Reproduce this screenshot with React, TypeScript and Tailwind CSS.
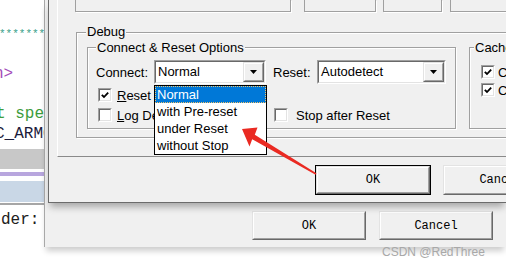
import React from "react";

function Check({ checked }: { checked?: boolean }) {
  return (
    <div className="w-[14px] h-[14px] shrink-0 border border-t-[#a0a0a0] border-l-[#a0a0a0] border-r-white border-b-white">
      <div className="w-full h-full bg-white border border-t-[#696969] border-l-[#696969] border-r-[#e3e3e3] border-b-[#e3e3e3] flex items-center justify-center">
        {checked && (
          <svg width="8" height="8" viewBox="0 0 8 8" className="block">
            <path d="M0.8 3.8 L3 6 L7.2 1.6" stroke="#000" strokeWidth="1.8" fill="none" />
          </svg>
        )}
      </div>
    </div>
  );
}

function Raised({ className, children }: { className?: string; children?: React.ReactNode }) {
  return (
    <div className={`shrink-0 border border-t-[#e3e3e3] border-l-[#e3e3e3] border-r-[#696969] border-b-[#696969] ${className ?? ""}`}>
      <div className="w-full h-full bg-[#f0f0f0] border border-t-white border-l-white border-r-[#a0a0a0] border-b-[#a0a0a0] flex items-center justify-center">
        {children}
      </div>
    </div>
  );
}

function Combo({ value, className, children }: { value: string; className: string; children?: React.ReactNode }) {
  return (
    <div className={`relative h-[24px] shrink-0 ${className}`}>
      <div className="h-full border border-t-[#a0a0a0] border-l-[#a0a0a0] border-r-white border-b-white">
        <div className="h-full flex bg-white border border-t-[#696969] border-l-[#696969] border-r-[#e3e3e3] border-b-[#e3e3e3]">
          <div className="flex-1 pl-[2px] leading-[20px] whitespace-nowrap overflow-hidden">{value}</div>
          <Raised className="w-[21px] h-full">
            <svg width="7" height="4" viewBox="0 0 7 4" className="block">
              <path d="M0 0H7L3.5 4Z" fill="#000" />
            </svg>
          </Raised>
        </div>
      </div>
      {children}
    </div>
  );
}

function DlgButton({ label, className, isDefault }: { label: string; className: string; isDefault?: boolean }) {
  const inner = (
    <Raised className="w-full h-full">
      <span className="font-['Liberation_Mono','Courier_New',monospace] text-[12px] leading-[14px] text-black">{label}</span>
    </Raised>
  );
  if (isDefault) {
    return <div className={`shrink-0 border border-black ${className}`}>{inner}</div>;
  }
  return <div className={`shrink-0 ${className}`}>{inner}</div>;
}

const etched = "border border-[#a0a0a0] shadow-[inset_1px_1px_0_#fff,1px_1px_0_#fff]";

function Editor() {
  return (
    <div className="w-[44px] shrink-0 h-full overflow-hidden bg-white flex flex-col font-['Liberation_Mono','Courier_New',monospace] text-[16px] leading-[20px] whitespace-nowrap">
      <div className="mt-[24px] h-[20px] text-[11px] leading-[20px] text-[#38a08a] ml-[-1px]">**********</div>
      <div className="mt-[20px] h-[20px] text-[#a44cb8] ml-[-6px]">n&gt;</div>
      <div className="mt-[20px] h-[20px] text-[#3c9c3c] ml-[-4px]">t spec</div>
      <div className="h-[20px] text-[#1c1c3c] ml-[-5px]">C_ARMCC</div>
      <div className="mt-[5px] h-[20px] bg-[#c8c8c8]" />
      <div className="mt-[3px] h-[4px] bg-[#b8a6de]" />
      <div className="mt-[5px] h-[21px] bg-[#c9d7e6]" />
      <div className="mt-[1px] h-[2px] bg-[#a6a6a6]" />
      <div className="mt-[5px] h-[20px] text-[#202020] ml-[1px]">der:</div>
    </div>
  );
}

function BackWindow() {
  return (
    <div className="absolute left-[44px] top-0 w-[462px] h-[247px] bg-[#f0f0f0] border-l border-[#a8a8a8] shadow-[0_6px_6px_-2px_rgba(0,0,0,0.2)] flex">
      <div className="mt-[211px] ml-[207px] flex gap-[13px] h-[29px]">
        <DlgButton label="OK" className="w-[114px] h-[29px]" />
        <DlgButton label="Cancel" className="w-[114px] h-[29px]" />
      </div>
    </div>
  );
}

function FrontWindow() {
  return (
    <div className="absolute left-[48px] top-0 w-[458px] h-[203px] bg-[#f0f0f0] border-l border-b border-[#6b6b6b] shadow-[0_6px_7px_-2px_rgba(0,0,0,0.3)] flex flex-col overflow-hidden">
      {/* tab page */}
      <div className="ml-[8px] w-[470px] h-[157px] shrink-0 border-l border-l-white border-b border-b-[#8a8a8a] flex flex-col">
        {/* bottoms of the boxes above */}
        <div className="flex h-[12px] shrink-0">
          <div className="ml-[17px] w-[224px] border-x border-b border-[#a0a0a0] shadow-[1px_1px_0_#fff]" />
          <div className="ml-[13px] w-[74px] border-x border-b border-[#a0a0a0] shadow-[1px_1px_0_#fff]" />
          <div className="ml-[7px] w-[61px] border-x border-b border-[#a0a0a0] shadow-[1px_1px_0_#fff]" />
          <div className="ml-[8px] w-[80px] border-x border-b border-[#a0a0a0] shadow-[1px_1px_0_#fff]" />
        </div>

        {/* Debug group */}
        <div className={`mt-[20px] ml-[18px] w-[460px] h-[106px] shrink-0 flex flex-col ${etched}`}>
          <div className="-mt-[9px] ml-[9px] px-[1px] bg-[#f0f0f0] w-fit leading-[15px]">Debug</div>
          <div className="flex mt-[8px] ml-[10px]">
            {/* Connect & Reset Options */}
            <div className={`w-[369px] h-[82px] shrink-0 flex flex-col ${etched}`}>
              <div className="-mt-[8px] ml-[8px] px-[1px] bg-[#f0f0f0] w-fit leading-[15px] whitespace-nowrap">Connect &amp; Reset Options</div>
              <div className="mt-[5px] flex items-center h-[24px]">
                <div className="ml-[8px] w-[58px] shrink-0 leading-[15px]">Connect:</div>
                <Combo value="Normal" className="w-[112px]">
                  <div className="absolute left-0 top-[25px] w-[113px] h-[70px] border border-black bg-white z-10 flex flex-col whitespace-nowrap">
                    <div className="h-[17px] bg-[#0078d7] text-white border border-dotted border-[#f2c36b] pl-[1px] leading-[15px]">Normal</div>
                    <div className="h-[17px] pl-[2px] leading-[17px]">with Pre-reset</div>
                    <div className="h-[17px] pl-[2px] leading-[17px]">under Reset</div>
                    <div className="h-[17px] pl-[2px] leading-[17px]">without Stop</div>
                  </div>
                </Combo>
                <div className="ml-[7px] w-[44px] shrink-0 leading-[15px]">Reset:</div>
                <Combo value="Autodetect" className="w-[129px]" />
              </div>
              <div className="mt-[4px] ml-[10px] h-[14px] flex items-center">
                <Check checked />
                <div className="ml-[5px] leading-[15px] whitespace-nowrap">
                  <span className="underline">R</span>eset after Connect
                </div>
              </div>
              <div className="mt-[6px] ml-[10px] h-[14px] flex items-center">
                <div className="w-[176px] shrink-0 flex items-center">
                  <Check />
                  <div className="ml-[5px] leading-[15px] whitespace-nowrap">
                    <span className="underline">L</span>og Debug Accesses
                  </div>
                </div>
                <Check />
                <div className="ml-[8px] leading-[15px] whitespace-nowrap">Stop after Reset</div>
              </div>
            </div>

            {/* Cache Options */}
            <div className={`ml-[13px] w-[80px] h-[82px] shrink-0 flex flex-col ${etched}`}>
              <div className="-mt-[8px] ml-[4px] px-[1px] bg-[#f0f0f0] w-fit leading-[15px] whitespace-nowrap">Cache Options</div>
              <div className="mt-[10px] ml-[11px] h-[14px] flex items-center">
                <Check checked />
                <div className="ml-[3px] leading-[15px] whitespace-nowrap">Cache Code</div>
              </div>
              <div className="mt-[4px] ml-[11px] h-[14px] flex items-center">
                <Check checked />
                <div className="ml-[3px] leading-[15px] whitespace-nowrap">Cache Memory</div>
              </div>
            </div>
          </div>
        </div>
      </div>

      {/* dialog buttons */}
      <div className="flex ml-[266px] mt-[8px] gap-[12px] shrink-0">
        <DlgButton label="OK" className="w-[116px] h-[30px]" isDefault />
        <DlgButton label="Cancel" className="w-[116px] h-[30px]" />
      </div>
    </div>
  );
}

function Arrow() {
  return (
    <svg className="absolute left-0 top-0 pointer-events-none z-20" width="506" height="268" viewBox="0 0 506 268">
      <polygon
        points="242,129 257.5,127.5 254.8,134.8 316.4,173.2 315.6,174.8 252.2,139.2 249.5,146.5"
        fill="#ea2a22"
      />
    </svg>
  );
}

export default function App() {
  return (
    <div className="relative w-[506px] h-[268px] overflow-hidden bg-white flex font-['Liberation_Sans',Arial,sans-serif] text-[13px] text-black">
      <Editor />
      <BackWindow />
      <FrontWindow />
      <Arrow />
      <div className="absolute left-[382px] top-[245px] text-[12px] leading-[14px] text-[#a8a8a8] whitespace-nowrap z-30">
        CSDN @RedThree
      </div>
    </div>
  );
}
